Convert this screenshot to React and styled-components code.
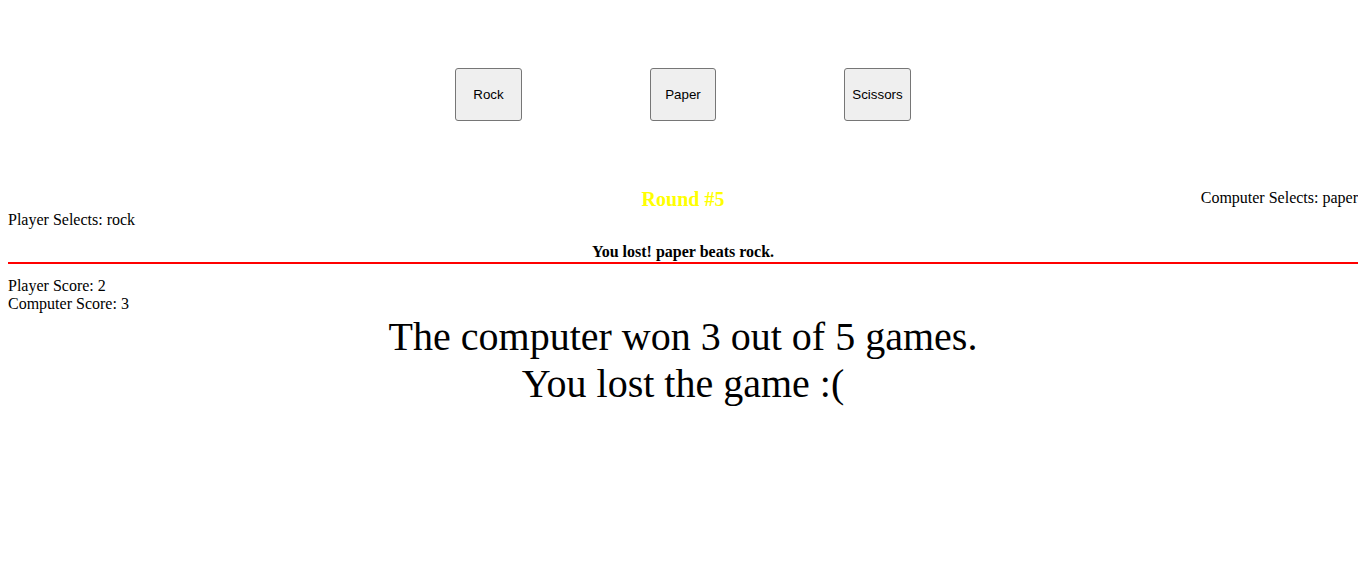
import React, { useState } from 'react';
import styled, { createGlobalStyle } from 'styled-components';

const GlobalStyle = createGlobalStyle`
  body {
    margin: 8px;
    background: #FFFFFF;
    color: #000000;
    font-family: "Liberation Serif", "Times New Roman", serif;
    font-size: 16px;
  }
`;

const Controls = styled.div`
  display: flex;
  justify-content: center;
  gap: 128px;
  padding-top: 60px;
`;

const ChoiceButton = styled.button`
  width: ${(props) => props.$width}px;
  height: 53px;
  padding: 0;
  background: #EFEFEF;
  border: 1px solid #767676;
  border-radius: 3px;
  color: #000000;
  font-family: "Liberation Sans", Arial, sans-serif;
  font-size: 13.33px;
  cursor: pointer;
`;

const RoundRow = styled.div`
  display: grid;
  grid-template-columns: 1fr auto 1fr;
  align-items: start;
  margin-top: 67px;
`;

const RoundTitle = styled.div`
  color: #FFFF00;
  font-size: 20px;
  font-weight: 700;
  line-height: 23px;
  text-align: center;
`;

const Selection = styled.div`
  line-height: 18px;
  padding-top: ${(props) => (props.$right ? '1px' : '0')};
  text-align: ${(props) => (props.$right ? 'right' : 'left')};
`;

const Result = styled.div`
  margin-top: 14px;
  padding-bottom: 1px;
  border-bottom: 2px solid #FF0000;
  font-weight: 700;
  line-height: 18px;
  text-align: center;
`;

const Scores = styled.div`
  margin-top: 13px;
  line-height: 18px;
`;

const FinalMessage = styled.div`
  font-size: 40px;
  line-height: 47px;
  text-align: center;
`;

const choices = [
  { label: 'Rock', width: 67 },
  { label: 'Paper', width: 66 },
  { label: 'Scissors', width: 67 },
];

const App = () => {
  const [game] = useState({
    round: 5,
    player: 'rock',
    computer: 'paper',
    playerScore: 2,
    computerScore: 3,
  });

  return (
    <>
      <GlobalStyle />
      <Controls>
        {choices.map((choice) => (
          <ChoiceButton key={choice.label} $width={choice.width}>{choice.label}</ChoiceButton>
        ))}
      </Controls>

      <RoundRow>
        <span />
        <RoundTitle>Round #{game.round}</RoundTitle>
        <Selection $right>Computer Selects: {game.computer}</Selection>
      </RoundRow>
      <Selection>Player Selects: {game.player}</Selection>

      <Result>You lost! {game.computer} beats {game.player}.</Result>

      <Scores>
        <div>Player Score: {game.playerScore}</div>
        <div>Computer Score: {game.computerScore}</div>
      </Scores>

      <FinalMessage>
        The computer won {game.computerScore} out of {game.round} games.
        <br />
        You lost the game :(
      </FinalMessage>
    </>
  );
};

export default App;
